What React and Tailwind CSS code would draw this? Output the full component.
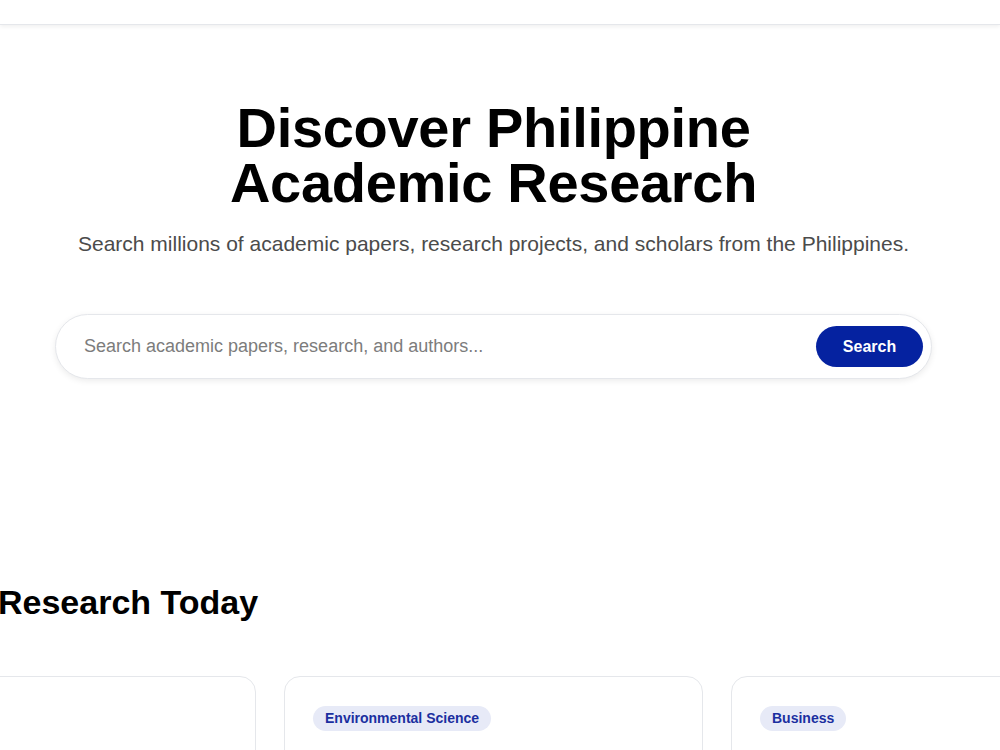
import React from 'react';

const featured = [
  { tag: 'Health Sciences' },
  { tag: 'Environmental Science' },
  { tag: 'Business' },
];

const App = () => {
  return (
    <div className="w-[1000px] min-h-[750px] overflow-hidden bg-white text-black" style={{ fontFamily: '"Liberation Sans", Arial, sans-serif' }}>
      {/* Header */}
      <div className="h-[25px] bg-white border-b border-gray-200 shadow-[0_2px_4px_rgba(0,0,0,0.06)]" />

      {/* Hero */}
      <div className="w-[987px] flex flex-col items-center pt-[75px]">
        <h1 className="text-[56px] leading-[55px] font-bold tracking-[-0.3px] text-center">
          Discover Philippine
          <br />
          Academic Research
        </h1>
        <p className="mt-[19px] text-[21px] leading-[30px] text-[#4b4b4b] text-center">
          Search millions of academic papers, research projects, and scholars from the Philippines.
        </p>

        <div className="mt-[55px] w-[877px] h-[65px] rounded-full border border-gray-200 bg-white shadow-[0_2px_6px_rgba(0,0,0,0.08)] flex items-center pl-7 pr-2">
          <input
            className="flex-1 bg-transparent outline-none text-[18px] text-gray-700 placeholder:text-[#7c7c7c]"
            placeholder="Search academic papers, research, and authors..."
          />
          <button className="h-[41px] w-[107px] rounded-full bg-[#0522a0] text-white text-[16px] font-semibold">
            Search
          </button>
        </div>

        {/* Featured research */}
        <div className="mt-[203px] w-full flex justify-center">
          <div className="w-[1313px] shrink-0">
            <h2 className="text-[34px] font-bold leading-[40px] pl-[8px]">Trending Research Today</h2>
            <div className="mt-[54px] grid grid-cols-3 gap-[28px]">
              {featured.map((f) => (
                <div key={f.tag} className="h-[200px] rounded-2xl border border-gray-200 bg-white px-7 pt-[29px]">
                  <span className="inline-block rounded-full bg-[#e7eaf7] px-3 py-[3px] text-[14px] leading-[19px] font-semibold text-[#1b2fa0]">
                    {f.tag}
                  </span>
                </div>
              ))}
            </div>
          </div>
        </div>
      </div>
    </div>
  );
};

export default App;
